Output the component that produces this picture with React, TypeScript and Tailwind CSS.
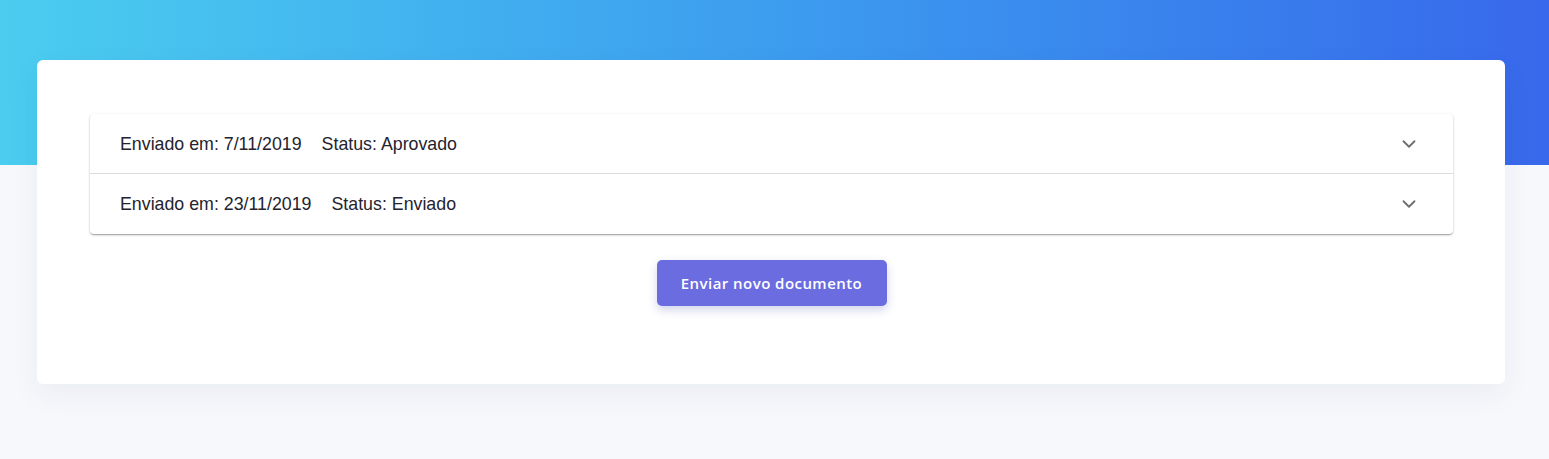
import {ChevronDown} from "lucide-react";

const documents = [
    {date: "7/11/2019", status: "Aprovado"},
    {date: "23/11/2019", status: "Enviado"},
];

export default function App() {
    return (
        <div className="relative min-h-[459px] w-full bg-[#f6f8fc] font-['Roboto',sans-serif]">
            {/* Gradient header */}
            <div className="absolute inset-x-0 top-0 h-[165px] bg-gradient-to-r from-[#4bcdef] to-[#3868eb]"></div>

            <div className="relative pt-[60px] pl-[37px] pr-[44px]">
                {/* Card */}
                <div className="bg-white rounded-md shadow-[0_10px_30px_rgba(30,50,90,0.06)] pt-[54px] pb-[78px] pl-[53px] pr-[52px]">
                    {/* Accordion list */}
                    <div className="rounded shadow-[0_1px_3px_rgba(0,0,0,0.2),0_1px_1px_rgba(0,0,0,0.14),0_2px_1px_-1px_rgba(0,0,0,0.12)]">
                        {documents.map((doc, i) => (
                            <div key={doc.date}
                                 className={`flex items-center justify-between h-[60px] pl-[30px] pr-[33px] ${i === 0 ? 'border-b border-[#dcdcdc]' : ''}`}>
                                <p className="text-[17.8px] text-[#24232e] flex gap-[20px] pt-px font-['Liberation_Sans',sans-serif]">
                                    <span>Enviado em: {doc.date}</span>
                                    <span>Status: {doc.status}</span>
                                </p>
                                <ChevronDown className="w-[22px] h-[22px] text-[#6f6f6f]" strokeWidth={2}/>
                            </div>
                        ))}
                    </div>

                    {/* Button */}
                    <div className="flex justify-center mt-[26px]">
                        <button
                            className="w-[230px] h-[46px] rounded-[5px] bg-[#6a6ce0] text-white text-[15px] font-semibold tracking-[0.45px] font-['Open_Sans',sans-serif] shadow-[0_4px_10px_rgba(80,80,180,0.25)]">
                            Enviar novo documento
                        </button>
                    </div>
                </div>
            </div>
        </div>
    )
}
